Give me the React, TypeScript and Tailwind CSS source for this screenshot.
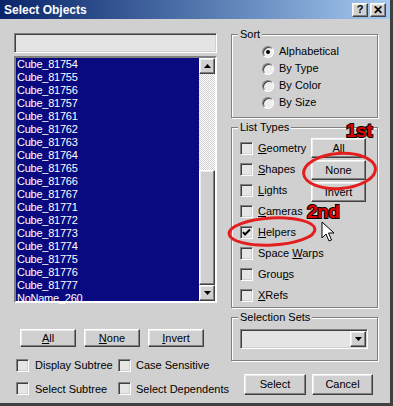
import type { ReactNode } from "react";

const FACE = "bg-[#d0d0d0]";
const RAISED =
  "border border-t-white border-l-white border-r-[#404040] border-b-[#404040] shadow-[inset_-1px_-1px_0_#808080,inset_1px_1px_0_#ececec]";
const SUNKEN =
  "border border-t-[#808080] border-l-[#808080] border-r-white border-b-white shadow-[inset_1px_1px_0_#404040,inset_-1px_-1px_0_#d0d0d0]";
const ETCHED = "border border-[#808080] shadow-[1px_1px_0_#fff,inset_1px_1px_0_#fff]";

const items = [
  "Cube_81754", "Cube_81755", "Cube_81756", "Cube_81757", "Cube_81761", "Cube_81762",
  "Cube_81763", "Cube_81764", "Cube_81765", "Cube_81766", "Cube_81767", "Cube_81771",
  "Cube_81772", "Cube_81773", "Cube_81774", "Cube_81775", "Cube_81776", "Cube_81777",
  "NoName_260",
];

// small black triangle used on scroll / dropdown buttons
function Arrow({ down }: { down?: boolean }) {
  return (
    <svg width="7" height="4" viewBox="0 0 7 4">
      <polygon points={down ? "0,0 7,0 3.5,4" : "0,4 7,4 3.5,0"} fill="#000" />
    </svg>
  );
}

function Check({ checked }: { checked?: boolean }) {
  return (
    <div className={`w-[13px] h-[13px] shrink-0 bg-[#e6e6e6] flex items-center justify-center ${SUNKEN}`}>
      {checked && (
        <svg width="9" height="9" viewBox="0 0 9 9">
          <path d="M1 4 L3 6.5 L8 1.5" stroke="#000" strokeWidth="2" fill="none" />
        </svg>
      )}
    </div>
  );
}

function Radio({ on }: { on?: boolean }) {
  return (
    <div className="w-[12px] h-[12px] rounded-full shrink-0 bg-[#eeeeee] border border-t-[#808080] border-l-[#808080] border-r-white border-b-white shadow-[inset_1px_1px_0_#404040] flex items-center justify-center">
      {on && <div className="w-[4px] h-[4px] rounded-full bg-black" />}
    </div>
  );
}

function Btn({ children, className = "" }: { children: ReactNode; className?: string }) {
  return (
    <div className={`${FACE} ${RAISED} flex items-center justify-center text-[11px] text-black ${className}`}>
      {children}
    </div>
  );
}

function Group({ label, className = "", children }: { label: string; className?: string; children: ReactNode }) {
  return (
    <div className={`relative ${ETCHED} ${className}`}>
      <span className={`absolute -top-[8px] left-[6px] px-[2px] leading-[14px] ${FACE}`}>{label}</span>
      {children}
    </div>
  );
}

const annot =
  "absolute text-[19px] font-bold text-[#e00000] leading-none tracking-[-0.5px] [-webkit-text-stroke:2px_#000] [paint-order:stroke_fill]";

export default function App() {
  return (
    <div
      className={`w-[393px] h-[406px] ${FACE} flex flex-col overflow-hidden relative text-[11px] text-black font-['Liberation_Sans',Arial,sans-serif] border-r-[3px] border-b-[3px] border-r-[#404040] border-b-[#404040]`}
    >
      {/* title bar */}
      <div className="h-[19px] shrink-0 flex items-center bg-gradient-to-r from-[#0a246a] to-[#a6caf0] pl-[4px] pr-[4px]">
        <span className="text-white font-bold text-[12px] leading-none">Select Objects</span>
        <div className="ml-auto flex gap-[2px]">
          <Btn className="w-[16px] h-[14px] font-bold text-[11px] leading-none">?</Btn>
          <Btn className="w-[16px] h-[14px] font-bold text-[12px] leading-none">✕</Btn>
        </div>
      </div>

      <div className="flex">
        {/* left column */}
        <div className="ml-[14px] w-[203px] pt-[14px] flex flex-col">
          <div className={`h-[20px] bg-[#e4e4e4] ${SUNKEN}`} />

          <div className="mt-[3px] h-[247px] bg-[#0a0a80] flex border-2 border-t-[#808080] border-l-[#808080] border-r-white border-b-white">
            <div className="flex-1 flex flex-col pl-[1px] text-white tracking-[-0.25px]">
              {items.map((it) => (
                <div key={it} className="h-[13px] leading-[13px]">{it}</div>
              ))}
            </div>
            {/* scrollbar */}
            <div className="w-[16px] flex flex-col">
              <Btn className="h-[16px]"><Arrow /></Btn>
              <div className="h-[96px] bg-[repeating-conic-gradient(#d0d0d0_0_25%,#ffffff_0_50%)] bg-[length:2px_2px]" />
              <div className={`flex-1 ${FACE} ${RAISED}`} />
              <Btn className="h-[16px]"><Arrow down /></Btn>
            </div>
          </div>

          <div className="mt-[26px] ml-[6px] flex gap-[8px]">
            <Btn className="w-[56px] h-[18px]"><u>A</u>ll</Btn>
            <Btn className="w-[56px] h-[18px]"><u>N</u>one</Btn>
            <Btn className="w-[56px] h-[18px]"><u>I</u>nvert</Btn>
          </div>

          <div className="mt-[10px] ml-[2px] grid grid-cols-[102px_1fr] gap-y-[7px] whitespace-nowrap">
            <div className="flex items-center gap-[6px]"><Check /><span>Display Subtree</span></div>
            <div className="flex items-center gap-[5px]"><Check /><span>Case Sensitive</span></div>
            <div className="flex items-center gap-[6px]"><Check /><span>Select Subtree</span></div>
            <div className="flex items-center gap-[5px]"><Check /><span>Select Dependents</span></div>
          </div>
        </div>

        {/* right column */}
        <div className="ml-[14px] w-[147px] pt-[15px] flex flex-col">
          <Group label="Sort" className="h-[84px] pt-[8px] pl-[30px]">
            {["Alphabetical", "By Type", "By Color", "By Size"].map((s, i) => (
              <div key={s} className="h-[17px] flex items-center gap-[5px]">
                <Radio on={i === 0} />
                <span>{s}</span>
              </div>
            ))}
          </Group>

          <Group label="List Types" className="mt-[9px] h-[181px] pt-[10px] pl-[8px] flex">
            <div className="w-[60px] shrink-0 flex flex-col whitespace-nowrap">
              {[
                <><u>G</u>eometry</>,
                <><u>S</u>hapes</>,
                <><u>L</u>ights</>,
                <><u>C</u>ameras</>,
                <><u>H</u>elpers</>,
                <>Space <u>W</u>arps</>,
                <>Grou<u>p</u>s</>,
                <><u>X</u>Refs</>,
              ].map((l, i) => (
                <div key={i} className="h-[21px] flex items-center gap-[5px]">
                  <Check checked={i === 4} />
                  <span>{l}</span>
                </div>
              ))}
            </div>
            <div className="ml-auto mr-[11px] flex flex-col gap-[2px]">
              <Btn className="w-[55px] h-[20px]">All</Btn>
              <Btn className="w-[55px] h-[20px]">None</Btn>
              <Btn className="w-[55px] h-[20px]">Invert</Btn>
            </div>
          </Group>

          <Group label="Selection Sets" className="mt-[9px] h-[44px] pt-[11px] pl-[8px]">
            <div className={`w-[128px] h-[20px] bg-[#e4e4e4] flex justify-end p-[1px] ${SUNKEN}`}>
              <Btn className="w-[16px] h-full"><Arrow down /></Btn>
            </div>
          </Group>

          <div className="mt-[13px] ml-[13px] flex gap-[6px]">
            <Btn className="w-[62px] h-[21px]">Select</Btn>
            <Btn className="w-[61px] h-[21px]">Cancel</Btn>
          </div>
        </div>
      </div>

      {/* annotations drawn over the dialog */}
      <svg className="absolute left-0 top-0 pointer-events-none" width="393" height="406">
        <ellipse cx="339.5" cy="171" rx="36" ry="17.5" transform="rotate(-4 339.5 171)" fill="none" stroke="#e41e1e" strokeWidth="3" />
        <ellipse cx="272" cy="231.5" rx="43" ry="13.5" transform="rotate(-3 272 231.5)" fill="none" stroke="#e41e1e" strokeWidth="3" />
        <polygon
          points="322,222 322,238 326,234 329,241 331.5,240 328.5,233 334,233"
          fill="#fff"
          stroke="#000"
          strokeWidth="1"
          strokeLinejoin="round"
        />
      </svg>
      <span className={`${annot} left-[346px] top-[121px]`}>1st</span>
      <span className={`${annot} left-[307px] top-[202px]`}>2nd</span>
    </div>
  );
}
